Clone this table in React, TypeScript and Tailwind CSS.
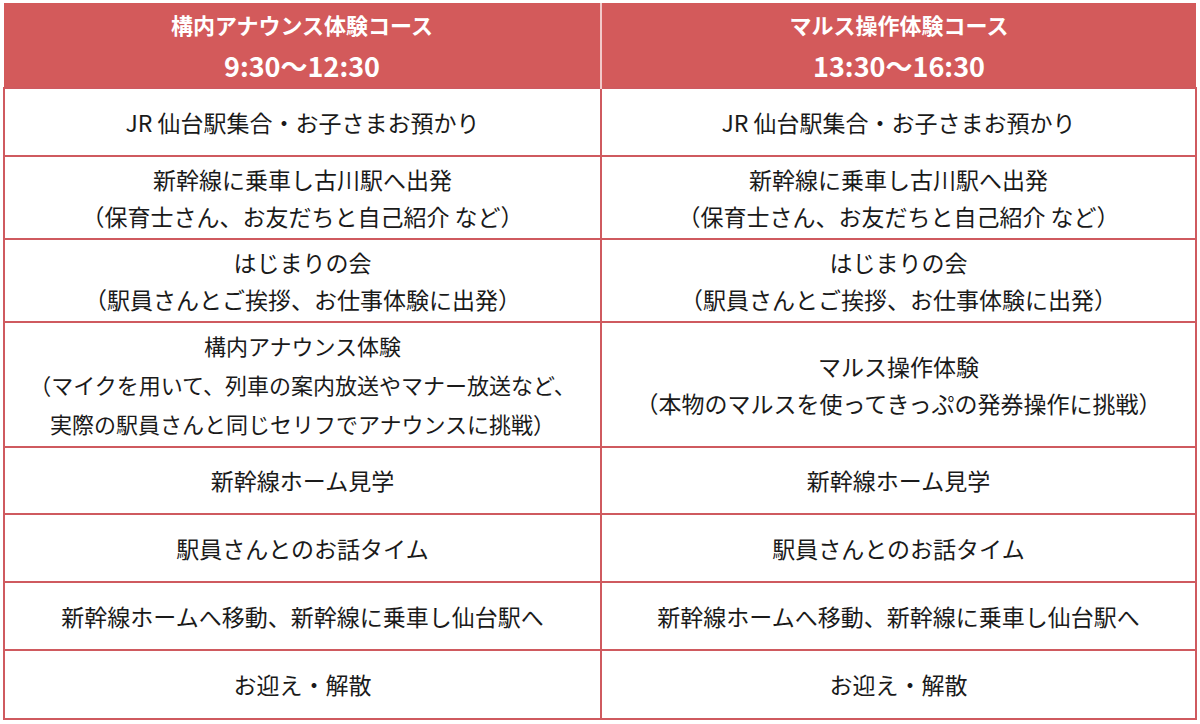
const rows: { h: string; a: string[]; b: string[] }[] = [
  { h: "h-[68px]", a: ["JR 仙台駅集合・お子さまお預かり"], b: ["JR 仙台駅集合・お子さまお預かり"] },
  {
    h: "h-[83px]",
    a: ["新幹線に乗車し古川駅へ出発", "（保育士さん、お友だちと自己紹介 など）"],
    b: ["新幹線に乗車し古川駅へ出発", "（保育士さん、お友だちと自己紹介 など）"],
  },
  {
    h: "h-[83px]",
    a: ["はじまりの会", "（駅員さんとご挨拶、お仕事体験に出発）"],
    b: ["はじまりの会", "（駅員さんとご挨拶、お仕事体験に出発）"],
  },
  {
    h: "h-[125px]",
    a: [
      "構内アナウンス体験",
      "（マイクを用いて、列車の案内放送やマナー放送など、",
      "実際の駅員さんと同じセリフでアナウンスに挑戦）",
    ],
    b: ["マルス操作体験", "（本物のマルスを使ってきっぷの発券操作に挑戦）"],
  },
  { h: "h-[67px]", a: ["新幹線ホーム見学"], b: ["新幹線ホーム見学"] },
  { h: "h-[68px]", a: ["駅員さんとのお話タイム"], b: ["駅員さんとのお話タイム"] },
  {
    h: "h-[68px]",
    a: ["新幹線ホームへ移動、新幹線に乗車し仙台駅へ"],
    b: ["新幹線ホームへ移動、新幹線に乗車し仙台駅へ"],
  },
  { h: "h-[69px]", a: ["お迎え・解散"], b: ["お迎え・解散"] },
];

function Cell({ lines }: { lines: string[] }) {
  // the long 3-line cell is set a touch smaller so it fits like the original
  const cls = lines.length === 3 ? "text-[22px] leading-[39px]" : "leading-[37px]";
  return (
    <td className="border-2 border-[#cf5a5f] bg-white p-0 text-center align-middle">
      {lines.map((l, i) => (
        <div key={i} className={cls}>
          {l}
        </div>
      ))}
    </td>
  );
}

export default function App() {
  return (
    <div
      className="min-h-[724px] w-[1200px] bg-white pl-[3px] pt-[3px] text-[23px] text-[#1a1a1a]"
      style={{ fontFamily: '"Noto Sans CJK JP", "Noto Sans", sans-serif' }}
    >
      <table className="w-[1194px] table-fixed border-collapse">
        <thead>
          <tr className="h-[84px] bg-[#d35a5b] font-bold text-white">
            <th className="w-[597px] border-r-2 border-r-[#f2c9ca] p-0 text-center align-middle">
              <div className="text-[22px] leading-[42px]">構内アナウンス体験コース</div>
              <div className="text-[27px] leading-[42px]">9:30〜12:30</div>
            </th>
            <th className="p-0 text-center align-middle">
              <div className="text-[22px] leading-[42px]">マルス操作体験コース</div>
              <div className="text-[27px] leading-[42px]">13:30〜16:30</div>
            </th>
          </tr>
        </thead>
        <tbody>
          {rows.map((r, i) => (
            <tr key={i} className={r.h}>
              <Cell lines={r.a} />
              <Cell lines={r.b} />
            </tr>
          ))}
        </tbody>
      </table>
    </div>
  );
}
